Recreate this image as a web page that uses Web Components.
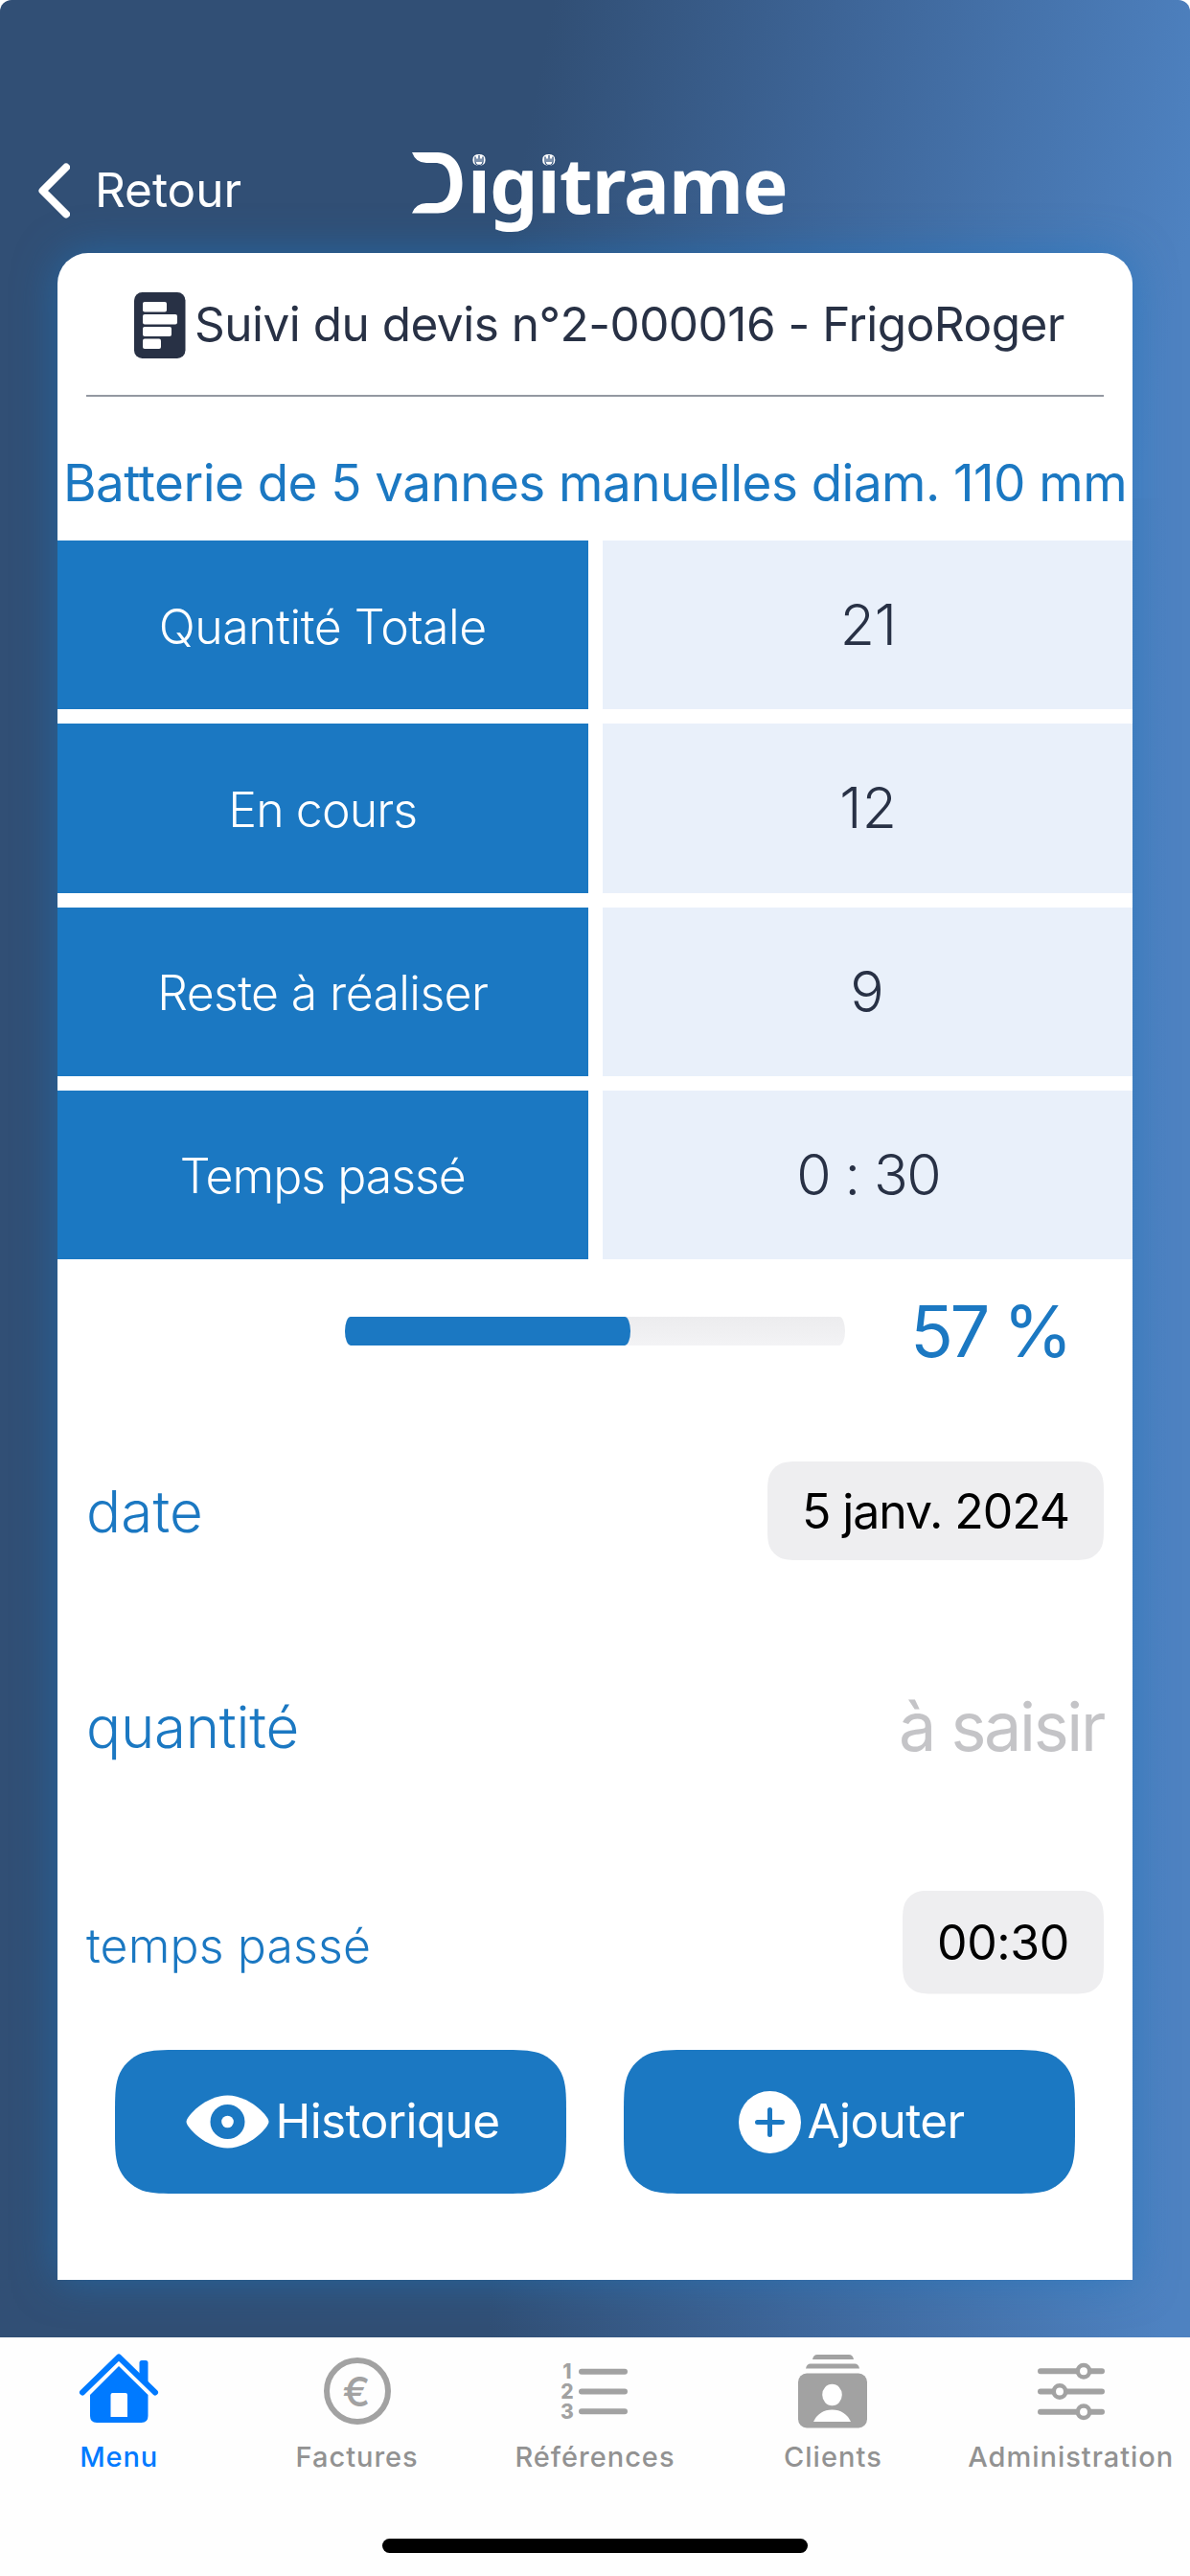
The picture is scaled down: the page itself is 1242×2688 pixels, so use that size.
<!DOCTYPE html>
<html lang="fr">
<head>
<meta charset="utf-8">
<title>Digitrame</title>
<style>
	body {
		margin: 0;
		background: #fff;
		font-family: Inter, Roboto, "Liberation Sans", sans-serif;
	}
</style>
</head>
<body>
<dt-screen>
	<dt-header slot="header"></dt-header>
	<dt-card>
		<dt-title>Suivi du devis n°2-000016 - FrigoRoger</dt-title>
		<dt-subtitle>Batterie de 5 vannes manuelles diam. 110 mm</dt-subtitle>
		<dt-stats></dt-stats>
		<dt-progress value="57"></dt-progress>
		<dt-field label="date" size="60" fit="122" drop="1"><dt-pill w="351" h="103" fit="279">5 janv. 2024</dt-pill></dt-field>
		<dt-field label="quantité" size="60" fit="222" drop="1"><dt-text size="70" fit="214" style="color:#c4c4c7">à saisir</dt-text></dt-field>
		<dt-field label="temps passé" size="50" fit="297" drop="7"><dt-pill w="210" h="108" fit="138">00:30</dt-pill></dt-field>
		<dt-actions>
			<dt-button icon="eye" fit="234">Historique</dt-button>
			<dt-button icon="plus" fit="164">Ajouter</dt-button>
		</dt-actions>
	</dt-card>
	<dt-tabbar slot="footer">
		<dt-tab icon="home" fit="82" active>Menu</dt-tab>
		<dt-tab icon="euro" fit="128">Factures</dt-tab>
		<dt-tab icon="list" fit="167">Références</dt-tab>
		<dt-tab icon="clients" fit="103">Clients</dt-tab>
		<dt-tab icon="sliders" fit="215">Administration</dt-tab>
	</dt-tabbar>
</dt-screen>

<script>
	const component = (name, c) => {
		customElements.define(name, class extends HTMLElement {
			connectedCallback() {
				if (this.shadowRoot) return
				this.DOM = this.attachShadow({ mode: 'open' })
				this.DOM.innerHTML = `<style>${c.styles.call(this)}</style>${c.template.call(this)}`
				c.ready && c.ready.call(this)
			}
		})
	}

	// rounded rectangle with continuous corners, as iOS draws them
	const squircle = (w, h, r) => {
		const [a, b, c, d, e, f, g] = [1.52866, 1.08849, 0.86841, 0.63149, 0.37282, 0.16906, 0.07491].map((n) => n * r)
		return `path("M${a} 0L${w - a} 0C${w - b} 0 ${w - c} 0 ${w - d} ${g}C${w - e} ${f} ${w - f} ${e} ${w - g} ${d}C${w} ${c} ${w} ${b} ${w} ${a}` +
			`L${w} ${h - a}C${w} ${h - b} ${w} ${h - c} ${w - g} ${h - d}C${w - f} ${h - e} ${w - e} ${h - f} ${w - d} ${h - g}C${w - c} ${h} ${w - b} ${h} ${w - a} ${h}` +
			`L${a} ${h}C${b} ${h} ${c} ${h} ${d} ${h - g}C${e} ${h - f} ${f} ${h - e} ${g} ${h - d}C0 ${h - c} 0 ${h - b} 0 ${h - a}` +
			`L0 ${a}C0 ${b} 0 ${c} ${g} ${d}C${f} ${e} ${e} ${f} ${d} ${g}C${c} 0 ${b} 0 ${a} 0Z")`
	}

	const icons = {
		back: `<svg width="34" height="58" viewBox="0 0 34 58" fill="none" stroke="#fff" stroke-width="8" stroke-linecap="round" stroke-linejoin="round"><path d="M30 4.500 5.500 29 30 53.500"/></svg>`,
		doc: `<svg width="54" height="69" viewBox="0 0 54 69"><rect width="53.500" height="69" rx="8.500" fill="#283145"/><g fill="#fff"><rect x="9" y="10" width="25" height="10.500" rx="2"/><rect x="9" y="23" width="36" height="10.500" rx="2"/><rect x="9" y="36" width="30" height="10" rx="2"/><rect x="9" y="48.500" width="19" height="10.500" rx="2"/></g></svg>`,
		eye: `<svg width="87" height="56" viewBox="0 0 87 56"><path d="M43.500 .5C66 .5 86.500 22 86.500 28S66 55.500 43.500 55.500.5 34 .5 28 21 .5 43.500.5Z" fill="#fff"/><circle cx="43.500" cy="28" r="18" fill="#1b78c2"/><circle cx="43.500" cy="28" r="6.300" fill="#fff"/></svg>`,
		plus: `<svg width="65" height="65" viewBox="0 0 65 65"><circle cx="32.500" cy="32.500" r="32.500" fill="#fff"/><path d="M32.500 19.500v26M19.500 32.500h26" stroke="#1b78c2" stroke-width="5" stroke-linecap="round"/></svg>`,
		home: `<svg viewBox="0 0 100 84"><path d="M12 42.500 50 5.500l38 37" fill="none" stroke="currentColor" stroke-width="6" stroke-linecap="round" stroke-linejoin="round"/><path d="M71.500 24V11.500q0-2.500 2.500-2.500h4q2.500 0 2.500 2.500V35Z" fill="currentColor"/><path fill-rule="evenodd" d="M50 15 80.500 45V67q0 7-7 7H27q-7 0-7-7V45ZM43.500 43q-2 0-2 2v23h17.500V45q0-2-2-2Z" fill="currentColor"/></svg>`,
		euro: `<svg viewBox="0 0 100 84"><circle cx="50" cy="41" r="32" fill="none" stroke="currentColor" stroke-width="6"/><text x="49" y="56.500" text-anchor="middle" font-size="43" font-weight="500" fill="currentColor">€</text></svg>`,
		list: `<svg viewBox="0 0 100 84"><g font-size="21" font-weight="800" text-anchor="middle" fill="currentColor"><text x="21" y="28">1</text><text x="21" y="49">2</text><text x="21" y="70">3</text></g><path d="M36 20.700h45M36 41.500h45M36 62.300h45" stroke="currentColor" stroke-width="6" stroke-linecap="round"/></svg>`,
		clients: `<svg viewBox="0 0 100 84" fill="currentColor"><path d="M29 8q1-5 5-5h33q4 0 5 5ZM22 17.500q1-5 5-5h46q4 0 5 5Z"/><rect x="14" y="22.500" width="72" height="57" rx="9"/><g fill="#fff"><ellipse cx="49.500" cy="45" rx="10.300" ry="11.200"/><path d="M30 73q6-12.500 19.500-12.500T69 73Z"/></g></svg>`,
		sliders: `<svg viewBox="0 0 100 84" stroke="currentColor" stroke-linecap="round"><path d="M18 20.300h64M18 41.500h64M18 62.700h64" stroke-width="6"/><g fill="#fff" stroke-width="4.500"><circle cx="63" cy="20.300" r="6.200"/><circle cx="38" cy="41.500" r="6.200"/><circle cx="63" cy="62.700" r="6.200"/></g></svg>`,
	}

	// one line of text, tracked so that its advance equals "fit"
	component('dt-text', {
		styles() {
			return `
				:host { display: block; }
				span { display: inline-block; white-space: nowrap; line-height: 1.2; font-size: ${this.getAttribute('size')}px; font-weight: ${this.getAttribute('weight') || 400}; }
			`
		},
		template: () => `<span><slot></slot></span>`,
		ready() {
			const span = this.DOM.querySelector('span')
			const gap = (this.getAttribute('fit') - span.getBoundingClientRect().width) / this.textContent.length
			if (this.hasAttribute('fit')) span.style.letterSpacing = `${gap}px`
		},
	})

	component('dt-screen', {
		styles: () => `
			:host {
				display: flex; flex-direction: column; box-sizing: border-box; height: 2688px; border-radius: 12px 12px 0 0; overflow: hidden;
				background:
					linear-gradient(101deg, #314f75 43%, #3e6699 67%, #4e82c1 96%) top / 100% 520px no-repeat,
					linear-gradient(to right, #314f75 41%, #3e6699 66%, #4e82c1 98%);
			}
			main { flex: 1; padding: 0 60px 60px; }
		`,
		template: () => `<slot name="header"></slot><main><slot></slot></main><slot name="footer"></slot>`,
	})

	component('dt-header', {
		styles: () => `
			:host { display: grid; grid-template-columns: 391px 1fr; height: 264px; padding: 0 40px 0 39px; box-sizing: border-box; color: #fff; }
			nav { display: flex; align-items: center; gap: 26px; height: 133px; margin-top: 132px; }
			.logo { display: flex; align-items: flex-start; margin-top: 159px; }
			.word { position: relative; margin: -15px 0 0 4px; font-family: "Noto Sans", sans-serif; }
			.prints { position: absolute; left: 0; top: 17px; fill: none; stroke: #35557f; stroke-width: 1.3px; }
		`,
		template: () => `
			<nav>${icons.back}<dt-text size="49.500" fit="153">Retour</dt-text></nav>
			<div class="logo">
				<svg width="54" height="64" viewBox="0 0 54 64"><path d="M0 0h27C44 0 52.500 14 52.500 32S44 63.500 27 63.500H0Q4 53 15 53h9C36 53 40 44 40 32S36 11 24 11H15Q4 11 0 0Z" fill="#fff"/></svg>
				<div class="word">
					<dt-text size="80" weight="700" fit="334">igitrame</dt-text>
					<svg class="prints" width="100" height="14" viewBox="0 0 100 14">
						<path d="M8 2.500v5a4 4 0 0 0 8 0v-5M12 1v7M10 4.500v3.500M14 4.500v3.500"/>
						<path d="M81 2.500v5a4 4 0 0 0 8 0v-5M85 1v7M83 4.500v3.500M87 4.500v3.500"/>
					</svg>
				</div>
			</div>
		`,
	})

	component('dt-card', {
		styles: () => `
			:host { display: block; height: 2115px; border-radius: 32px 32px 0 0; background: #fff; box-shadow: 0 0 44px rgba(27, 120, 194, 0.55); }
		`,
		template: () => `<slot></slot>`,
	})

	component('dt-title', {
		styles: () => `
			:host { display: flex; align-items: center; justify-content: center; gap: 9px; height: 150px; margin: 0 30px; padding: 2px 0 0 9px; box-sizing: border-box; border-bottom: 2px solid #9398a1; color: #283145; }
		`,
		template() {
			return `${icons.doc}<dt-text size="49.500" fit="908">${this.textContent}</dt-text>`
		},
	})

	component('dt-subtitle', {
		styles: () => `
			:host { display: flex; align-items: center; justify-content: center; height: 150px; padding-top: 32px; box-sizing: border-box; color: #1b78c2; }
		`,
		template() {
			return `<dt-text size="53" fit="1110">${this.textContent}</dt-text>`
		},
	})

	component('dt-stats', {
		styles: () => `
			:host { display: grid; grid-template-columns: 1fr 1fr; grid-auto-rows: 176.250px; gap: 15px; text-align: center; }
			div { display: flex; align-items: center; justify-content: center; box-sizing: border-box; }
			.label { padding-top: 3px; background: #1b78c2; color: #fff; }
			.value { padding: 1px 0 0 2px; background: #e9f0fa; color: #283145; }
		`,
		template: () => [
			['Quantité Totale', 342, '21', 59],
			['En cours', 197, '12', 60],
			['Reste à réaliser', 345, '9', 38],
			['Temps passé', 298, '0 : 30', 150],
		].map(([label, lw, value, vw]) => `
			<div class="label"><dt-text size="50" weight="330" fit="${lw}">${label}</dt-text></div>
			<div class="value"><dt-text size="59" weight="340" fit="${vw}">${value}</dt-text></div>
		`).join(''),
	})

	component('dt-progress', {
		styles() {
			return `
				:host { display: flex; align-items: center; justify-content: space-between; height: 150px; padding: 0 66px 0 300px; color: #1b78c2; }
				.track { width: 522px; height: 30px; border-radius: 6px / 15px; background: linear-gradient(#ececee, #f3f3f5); }
				.bar { width: ${this.getAttribute('value')}%; height: 100%; border-radius: inherit; background: #1b78c2; }
			`
		},
		template() {
			return `<div class="track"><div class="bar"></div></div><dt-text size="74" fit="166">${this.getAttribute('value')} %</dt-text>`
		},
	})

	component('dt-field', {
		styles() {
			return `
				:host { display: flex; align-items: center; justify-content: space-between; height: 225px; padding: 0 30px; }
				.label { color: #1b78c2; padding-top: ${this.getAttribute('drop') || 0}px; }
			`
		},
		template() {
			return `<dt-text class="label" weight="340" size="${this.getAttribute('size')}" fit="${this.getAttribute('fit')}">${this.getAttribute('label')}</dt-text><slot></slot>`
		},
	})

	component('dt-pill', {
		styles() {
			const w = this.getAttribute('w')
			const h = this.getAttribute('h')
			return `
				:host { display: flex; align-items: center; justify-content: center; width: ${w}px; height: ${h}px; clip-path: ${squircle(w, h, 24)}; background: #eeeef0; color: #000; }
			`
		},
		template() {
			return `<dt-text size="50" fit="${this.getAttribute('fit')}">${this.textContent}</dt-text>`
		},
	})

	component('dt-actions', {
		styles: () => `:host { display: flex; gap: 60px; padding: 0 60px; }`,
		template: () => `<slot></slot>`,
	})

	component('dt-button', {
		styles: () => `
			:host { display: flex; align-items: center; justify-content: center; gap: 7px; width: 471px; height: 150px; padding-left: 4px; box-sizing: border-box; clip-path: ${squircle(471, 150, 45)}; background: #1b78c2; color: #fff; }
		`,
		template() {
			return `${icons[this.getAttribute('icon')]}<dt-text size="49.500" fit="${this.getAttribute('fit')}">${this.textContent}</dt-text>`
		},
	})

	component('dt-tabbar', {
		styles: () => `
			:host { display: flex; flex-direction: column; justify-content: space-between; align-items: center; height: 249px; padding-bottom: 24px; box-sizing: border-box; background: #fefefe; }
			nav { display: grid; grid-template-columns: repeat(5, 1fr); width: 100%; }
			.home { width: 444px; height: 15px; border-radius: 8px; background: #000; }
		`,
		template: () => `<nav><slot></slot></nav><div class="home"></div>`,
	})

	component('dt-tab', {
		styles() {
			const on = this.hasAttribute('active')
			return `
				:host { display: flex; flex-direction: column; align-items: center; padding-top: 15px; color: ${on ? '#007aff' : '#a2a2a2'}; }
				svg { width: 100px; height: 84px; }
				dt-text { margin-top: 9px; color: ${on ? '#007aff' : '#929292'}; }
			`
		},
		template() {
			return `${icons[this.getAttribute('icon')]}<dt-text size="29" weight="500" fit="${this.getAttribute('fit')}">${this.textContent}</dt-text>`
		},
	})
</script>
</body>
</html>
